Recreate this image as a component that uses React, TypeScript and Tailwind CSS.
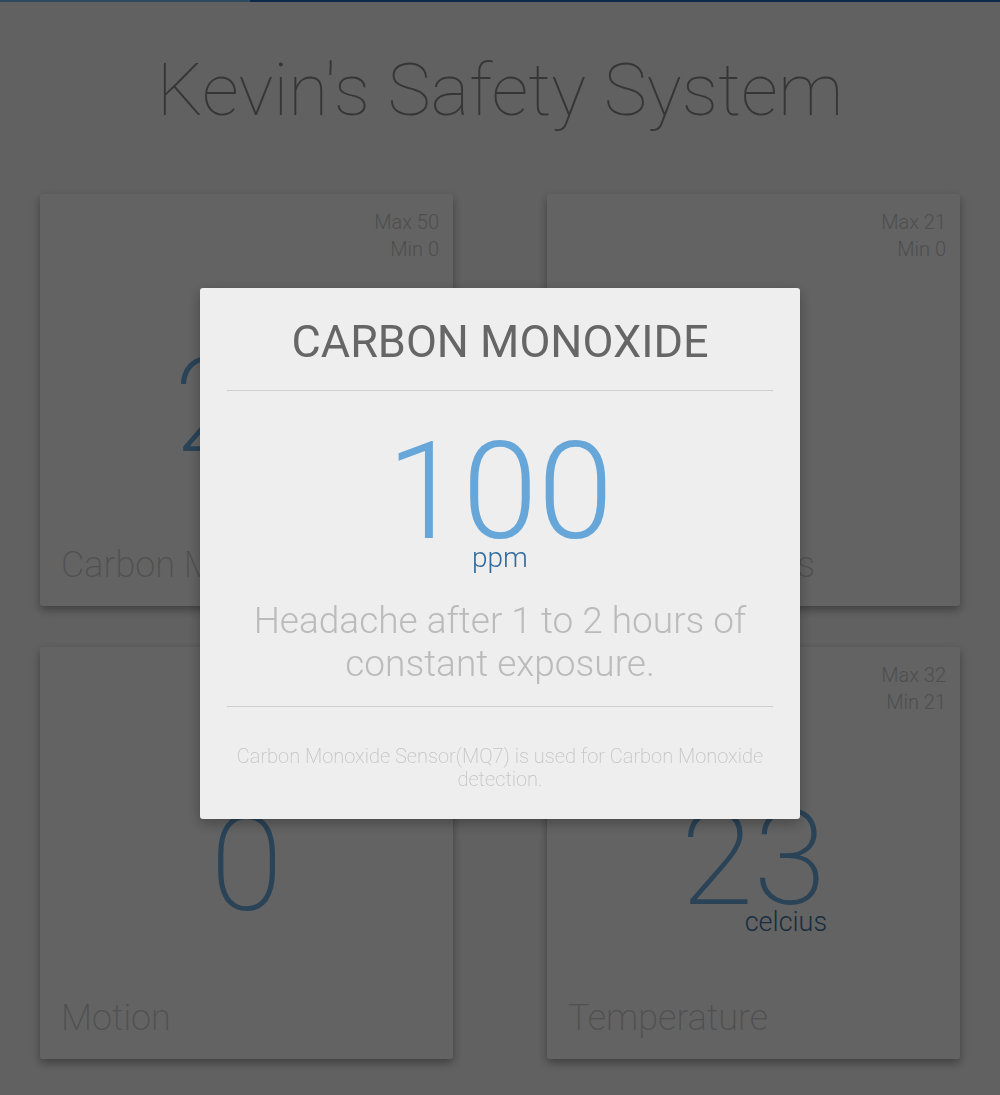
import React from 'react';

interface Sensor {
  id: string;
  label: string;
  value: string;
  unit?: string;
  max: number;
  min: number;
}

const sensors: Sensor[] = [
  { id: 'co', label: 'Carbon Monoxide', value: '24', unit: 'ppm', max: 50, min: 0 },
  { id: 'gas', label: 'Flammable Gas', value: '0', unit: 'ppm', max: 21, min: 0 },
  { id: 'motion', label: 'Motion', value: '0', max: 1, min: 0 },
  { id: 'temp', label: 'Temperature', value: '23', unit: 'celcius', max: 32, min: 21 },
];

const SensorCard: React.FC<{ sensor: Sensor }> = ({ sensor }) => (
  <div className="h-[412px] bg-[#f7f7f7] rounded-[3px] shadow-[0_4px_10px_rgba(0,0,0,0.35)] flex flex-col pt-[15px] pb-[19px]">
    <div className="self-end pr-[14px] text-right text-[20px] leading-[27px] font-light text-[#c4c4c4]">
      <div>Max {sensor.max}</div>
      <div>Min {sensor.min}</div>
    </div>
    <div className="flex-1 flex items-center justify-center pt-[16px]">
      <div className="inline-flex flex-col items-end">
        <span className="text-[132px] leading-none font-extralight text-[#6aa7d8]">{sensor.value}</span>
        {sensor.unit && (
          <span className="mt-[-16px] mr-[-1px] text-[27px] leading-none font-light text-[#41709c]">{sensor.unit}</span>
        )}
      </div>
    </div>
    <div className="pl-[21px] text-[36px] leading-[43px] font-extralight text-[#c8c8c8] whitespace-nowrap">{sensor.label}</div>
  </div>
);

export default function App() {
  return (
    <div className="min-h-[1095px] bg-[#f3f3f3] font-['Roboto','Liberation_Sans',sans-serif]">
      <div className="flex h-[2px]">
        <div className="w-[250px] bg-[#73b9f0]"></div>
        <div className="flex-1 bg-[#1c69b9]"></div>
      </div>
      <h1 className="pt-[46px] text-center text-[73px] leading-[1.17] font-thin text-[#888888]">Kevin's Safety System</h1>
      <div className="grid grid-cols-2 gap-x-[94px] gap-y-[41px] px-[40px] mt-[61px] pb-[40px]">
        {sensors.map(s => <SensorCard key={s.id} sensor={s} />)}
      </div>

      <div className="fixed inset-0 bg-black/60 flex items-center justify-center pt-[12px]">
        <div className="w-[600px] bg-[#eeeeee] rounded-[3px] shadow-[0_4px_14px_rgba(0,0,0,0.3)] px-[27px] pt-[28px] pb-[28px] flex flex-col items-center text-center">
          <h3 className="text-[45px] leading-[1.17] font-normal text-[#666666]">CARBON MONOXIDE</h3>
          <div className="w-full h-px bg-[#cfcfcf] mt-[21px]"></div>
          <div className="flex flex-col items-center mt-[33px]">
            <span className="text-[136px] leading-none font-light text-[#67a6d8]">100</span>
            <span className="mt-[-16px] text-[28px] leading-none font-light text-[#2f6b9f]">ppm</span>
          </div>
          <p className="mt-[27px] text-[37px] leading-[43px] font-light text-[#bbbbbb] px-[16px]">Headache after 1 to 2 hours of constant exposure.</p>
          <div className="w-full h-px bg-[#cfcfcf] mt-[21px]"></div>
          <p className="mt-[38px] text-[20px] leading-[23px] font-extralight text-[#c4c4c4]">Carbon Monoxide Sensor(MQ7) is used for Carbon Monoxide detection.</p>
        </div>
      </div>
    </div>
  );
}
